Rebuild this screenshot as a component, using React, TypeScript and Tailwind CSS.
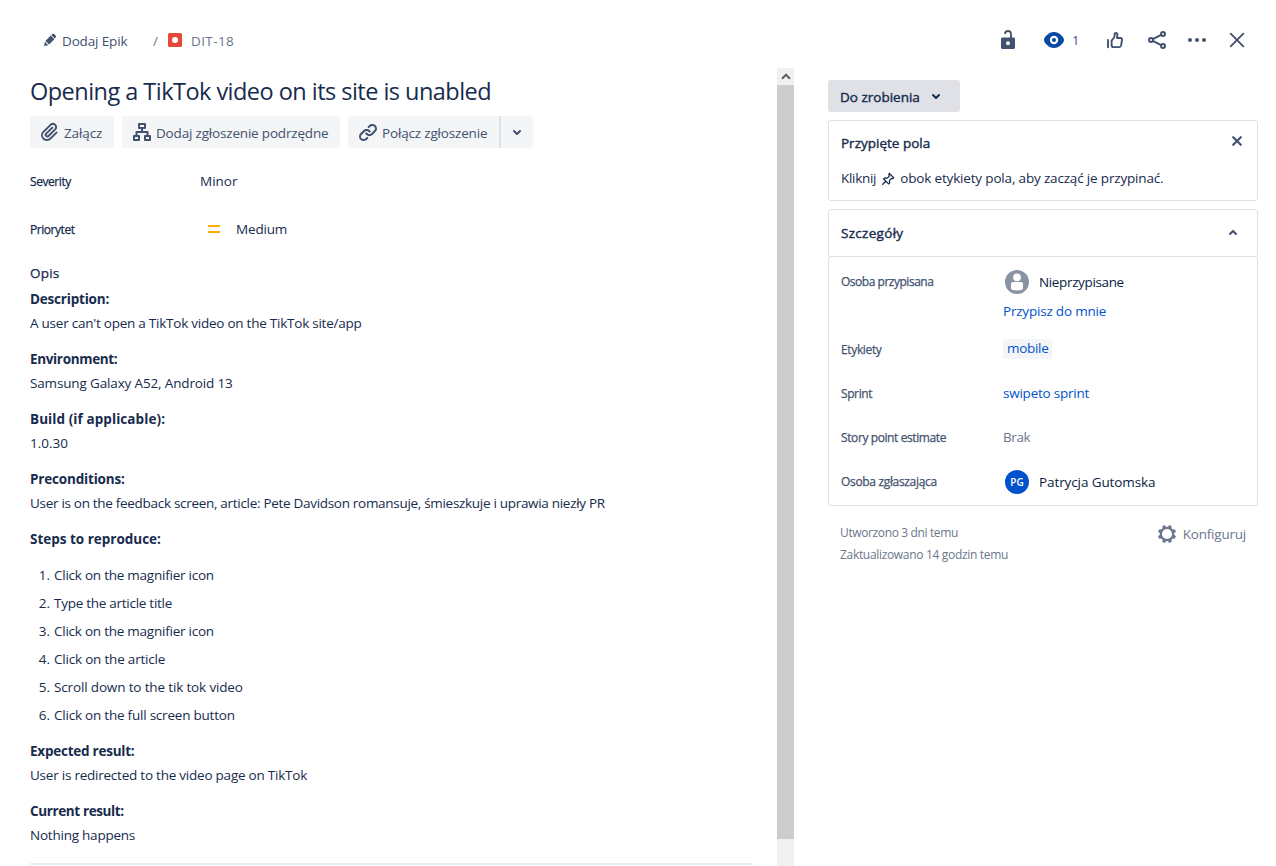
import React from "react";

const steps = [
  { text: "Click on the magnifier icon", cls: "tracking-[-0.24px]" },
  { text: "Type the article title", cls: "tracking-[-0.27px]" },
  { text: "Click on the magnifier icon", cls: "tracking-[-0.24px]" },
  { text: "Click on the article", cls: "tracking-[-0.2px]" },
  { text: "Scroll down to the tik tok video", cls: "tracking-[-0.15px]" },
  { text: "Click on the full screen button", cls: "tracking-[-0.22px]" },
];

function Icon({ className = "", children }: { className?: string; children: React.ReactNode }) {
  return (
    <svg viewBox="0 0 24 24" className={`size-6 shrink-0 ${className}`} fill="currentColor">
      {children}
    </svg>
  );
}

function ChevronDown({ className = "" }: { className?: string }) {
  return (
    <Icon className={className}>
      <path d="M8.292 10.293a1.009 1.009 0 000 1.419l2.939 2.965c.218.215.5.322.779.322s.556-.107.769-.322l2.93-2.955a1.01 1.01 0 000-1.419.987.987 0 00-1.406 0l-2.298 2.317-2.307-2.327a.99.99 0 00-1.406 0z" />
    </Icon>
  );
}

function Header() {
  return (
    <header className="flex h-[68px] shrink-0 items-start justify-between pt-[28px] pl-[38px] pr-[27px]">
      <div className="flex h-6 items-center text-[#42526e]">
        <Icon>
          <path d="M6.200 18l.6-4.200 3.500 3.500zM7.400 12.900l5.300-5.300 3.700 3.700-5.300 5.300zM13.300 7l.9-.8c.7-.6 1.500-.6 2.100 0l1.300 1.300c.6.6.6 1.400 0 2.100l-.8.9z" />
        </Icon>
        <span className="w-[91px] pt-[2px] tracking-[-0.15px]">Dodaj Epik</span>
        <span className="w-[15px] pt-[2px] text-[#6b778c]">/</span>
        <svg viewBox="0 0 14 14" className="size-[14px]">
          <rect width="14" height="14" rx="1.5" fill="#e5493a" />
          <circle cx="7" cy="7" r="3" fill="#fff" />
        </svg>
        <span className="ml-[9px] pt-[2px] tracking-[0.4px] text-[#6b778c]">DIT-18</span>
      </div>
      <div className="flex h-6 items-center text-[#42526e]">
        <Icon>
          <path
            fillRule="evenodd"
            d="M6.500 9.500h11c.8 0 1.500.7 1.500 1.500v8.500c0 .8-.7 1.500-1.500 1.500h-11c-.8 0-1.500-.7-1.500-1.500V11c0-.8.7-1.500 1.500-1.500zM12 13.200a2 2 0 100 4 2 2 0 000-4z"
          />
          <path d="M15 10.500V6a3 3 0 00-6 0" fill="none" stroke="currentColor" strokeWidth="1.800" />
        </Icon>
        <Icon className="ml-[22px] text-[#0747a6]">
          <path
            fillRule="evenodd"
            d="M12 4C6.800 4 2 9.200 2 12s4.800 8 10 8 10-5.200 10-8-4.800-8-10-8zM12 7.800a4.200 4.200 0 110 8.400 4.200 4.200 0 010-8.400z"
          />
          <circle cx="12" cy="12" r="2" />
        </Icon>
        <span className="ml-[6px] w-[31px] pt-[2px] text-[13px] text-[#5243aa]">1</span>
        <Icon>
          <g fill="none" stroke="currentColor" strokeWidth="1.900" strokeLinejoin="round" strokeLinecap="round">
            <path d="M5 12v7.200" />
            <path d="M8.600 12.700l2.500-3.200c.4-.6.500-1.600.5-2.700 0-1.100.6-1.800 1.400-1.800s1.500.8 1.400 2L14 10h3.500c1.100 0 1.700.9 1.500 1.900l-.9 5.500c-.2 1-.8 1.700-1.800 1.700h-5.700c-1.200 0-2-.8-2-1.900z" />
          </g>
        </Icon>
        <Icon className="ml-[18px]">
          <g fill="none" stroke="currentColor" strokeWidth="2">
            <circle cx="6" cy="12" r="2" />
            <circle cx="18" cy="6" r="2" />
            <circle cx="18" cy="18" r="2" />
            <path d="M7.800 11.100l8.400-4.200M7.800 12.900l8.400 4.200" />
          </g>
        </Icon>
        <Icon className="ml-[16px]">
          <circle cx="5" cy="12" r="2" />
          <circle cx="12" cy="12" r="2" />
          <circle cx="19" cy="12" r="2" />
        </Icon>
        <Icon className="ml-[16px]">
          <path d="M5.700 5.700l12.600 12.600M18.300 5.700L5.700 18.300" stroke="currentColor" strokeWidth="1.900" strokeLinecap="round" />
        </Icon>
      </div>
    </header>
  );
}

function Actions() {
  return (
    <div className="flex h-8 gap-2 text-[#42526e]">
      <div className="flex w-[84px] items-center rounded-[3px] bg-[#f4f5f7] pl-[8px]">
        <Icon>
          <path d="M11.643 17.965c-1.53 1.495-4.016 1.496-5.542.004a3.773 3.773 0 01.002-5.412l7.147-6.985a2.316 2.316 0 013.233-.003c.893.873.895 2.282.004 3.153l-6.703 6.55a.653.653 0 01-.914-.008.62.62 0 010-.902l6.229-6.087a.941.941 0 000-1.353.995.995 0 00-1.384 0l-6.23 6.087a2.502 2.502 0 000 3.607 2.643 2.643 0 003.683.009l6.703-6.55a4.074 4.074 0 00-.003-5.859 4.306 4.306 0 00-6.002.003l-7.148 6.985a5.655 5.655 0 00-.001 8.118c2.29 2.237 6.014 2.238 8.304.002l6.229-6.087a.941.941 0 000-1.353.995.995 0 00-1.384 0l-6.221 6.094z" />
        </Icon>
        <span className="ml-[2px] pt-[3px] tracking-[-0.12px]">Załącz</span>
      </div>
      <div className="flex w-[218px] items-center rounded-[3px] bg-[#f4f5f7] pl-[8px]">
        <Icon>
          <g fill="none" stroke="currentColor" strokeWidth="2" strokeLinejoin="round">
            <rect x="9" y="4" width="6" height="4" />
            <rect x="4" y="16" width="5" height="4" />
            <rect x="15" y="16" width="5" height="4" />
            <path d="M12 8v4M6.500 16v-4h11v4" />
          </g>
        </Icon>
        <span className="ml-[2px] pt-[3px] tracking-[-0.18px] whitespace-nowrap">Dodaj zgłoszenie podrzędne</span>
      </div>
      <div className="flex">
        <div className="flex w-[151px] items-center rounded-l-[3px] bg-[#f4f5f7] pl-[8px]">
          <Icon>
            <path d="M12.856 5.457l-.937.92a1.002 1.002 0 000 1.437 1.047 1.047 0 001.463 0l.984-.966c.967-.95 2.542-1.135 3.602-.288a2.54 2.54 0 01.203 3.81l-2.903 2.852a2.646 2.646 0 01-3.696 0l-1.11-1.09L9 13.57l1.108 1.089c1.822 1.788 4.802 1.788 6.622 0l2.905-2.852a4.558 4.558 0 00-.357-6.82c-1.893-1.517-4.695-1.226-6.422.47" />
            <path d="M11.144 19.543l.937-.92a1.002 1.002 0 000-1.437 1.047 1.047 0 00-1.462 0l-.985.966c-.967.95-2.541 1.135-3.602.288a2.54 2.54 0 01-.203-3.81l2.903-2.852a2.646 2.646 0 013.696 0l1.11 1.09L15 11.43l-1.108-1.089c-1.822-1.788-4.802-1.788-6.622 0l-2.905 2.852a4.558 4.558 0 00.357 6.82c1.893 1.517 4.695 1.226 6.422-.47" />
          </Icon>
          <span className="ml-[2px] pt-[3px] tracking-[-0.17px] whitespace-nowrap">Połącz zgłoszenie</span>
        </div>
        <div className="flex w-[34px] items-center rounded-r-[3px] border-l-2 border-[#dfe1e6] bg-[#f4f5f7] pl-[4px]">
          <ChevronDown />
        </div>
      </div>
    </div>
  );
}

function Section({ title, cls, children }: { title: string; cls: string; children?: React.ReactNode }) {
  return (
    <section className="leading-6">
      <h3 className={`h-6 font-bold ${cls}`}>{title}</h3>
      {children}
    </section>
  );
}

function Issue() {
  return (
    <main className="flex w-[777px] flex-col pl-[30px] pr-[24px]">
      <h1 className="mt-[7px] h-8 text-[23.5px] leading-8 tracking-[-0.53px] whitespace-nowrap">
        Opening a TikTok video on its site is unabled
      </h1>
      <div className="mt-[9px]">
        <Actions />
      </div>
      <div className="mt-[23px] flex h-5 items-center">
        <span className="w-[170px] pt-[1px] text-[12px] tracking-[-0.42px] [-webkit-text-stroke:0.25px]">Severity</span>
        <span>Minor</span>
      </div>
      <div className="mt-[28px] flex h-5 items-center">
        <span className="w-[178px] pt-[1px] text-[12px] tracking-[-0.45px] [-webkit-text-stroke:0.25px]">Priorytet</span>
        <svg viewBox="0 0 12 8" className="mr-[16px] h-[8px] w-[12px]">
          <path d="M0 1h12M0 7h12" stroke="#ffab00" strokeWidth="2" />
        </svg>
        <span className="tracking-[-0.17px]">Medium</span>
      </div>
      <h2 className="mt-[24px] h-5 leading-5 tracking-[0.2px] [-webkit-text-stroke:0.25px]">Opis</h2>
      <div className="mt-[4px] flex flex-col gap-3">
        <Section title="Description:" cls="tracking-[-0.2px]">
          <p className="tracking-[-0.24px]">A user can't open a TikTok video on the TikTok site/app</p>
        </Section>
        <Section title="Environment:" cls="tracking-[-0.34px]">
          <p className="tracking-[-0.15px]">Samsung Galaxy A52, Android 13</p>
        </Section>
        <Section title="Build (if applicable):" cls="tracking-[0.08px]">
          <p>1.0.30</p>
        </Section>
        <Section title="Preconditions:" cls="tracking-[-0.18px]">
          <p className="tracking-[-0.3px] whitespace-nowrap">
            User is on the feedback screen, article: Pete Davidson romansuje, śmieszkuje i uprawia niezły PR
          </p>
        </Section>
        <Section title="Steps to reproduce:" cls="tracking-[-0.01px]" />
        <ol className="flex flex-col gap-1 leading-6">
          {steps.map((s, i) => (
            <li key={i} className="flex">
              <span className="w-[24px] pr-[4px] text-right">{i + 1}.</span>
              <span className={s.cls}>{s.text}</span>
            </li>
          ))}
        </ol>
        <Section title="Expected result:" cls="tracking-[-0.24px]">
          <p className="tracking-[-0.23px]">User is redirected to the video page on TikTok</p>
        </Section>
        <Section title="Current result:" cls="tracking-[-0.38px]">
          <p className="tracking-[-0.23px]">Nothing happens</p>
        </Section>
      </div>
      <div className="mt-[16px] h-[2px] shrink-0 bg-[#ebecf0]" />
    </main>
  );
}

function Scrollbar() {
  return (
    <div className="flex w-[17px] flex-col bg-[#f0f0f0]">
      <div className="flex h-[17px] items-center justify-center pb-[1px]">
        <svg viewBox="0 0 10 7" className="h-[7px] w-[10px]">
          <path d="M1 5.700L5 1.700l4 4" fill="none" stroke="#606060" strokeWidth="2" />
        </svg>
      </div>
      <div className="h-[754px] bg-[#cdcdcd]" />
    </div>
  );
}

function Field({
  label,
  cls,
  className,
  children,
}: {
  label: string;
  cls: string;
  className: string;
  children: React.ReactNode;
}) {
  return (
    <div className={`flex ${className}`}>
      <span className={`w-[162px] shrink-0 text-[12px] leading-5 text-[#42526e] [-webkit-text-stroke:0.25px] ${cls}`}>
        {label}
      </span>
      {children}
    </div>
  );
}

function Sidebar() {
  return (
    <aside className="ml-[34px] w-[430px] pt-[12px]">
      <div className="flex h-8 w-[132px] items-center rounded-[3px] bg-[#dfe1e6] pl-3">
        <span className="w-[84px] pt-[3px] whitespace-nowrap [-webkit-text-stroke:0.4px]">Do zrobienia</span>
        <ChevronDown />
      </div>
      <section className="mt-[8px] h-[81px] rounded-[3px] border border-[#dfe1e6] pl-3">
        <div className="flex h-[40px] items-center justify-between pr-[8px]">
          <h2 className="pt-[4px] [-webkit-text-stroke:0.4px]">Przypięte pola</h2>
          <Icon className="text-[#42526e]">
            <path d="M8.200 8.200l7.600 7.600M15.800 8.200l-7.600 7.600" stroke="currentColor" strokeWidth="2.200" strokeLinecap="round" />
          </Icon>
        </div>
        <p className="mt-[7px] flex h-5 items-center whitespace-nowrap">
          <span className="tracking-[-0.29px]">Kliknij</span>
          <svg viewBox="0 0 14 14" className="mt-[1px] mr-[5px] ml-[5px] size-[14px]" fill="none" stroke="currentColor" strokeWidth="1.300" strokeLinejoin="round">
            <path d="M8.200 1.300l4.600 4.600-1.100.7-1.300-.1-1.900 1.900.1 2.700-1 .8L2.700 7l.9-1 2.700.1 1.900-1.900L8 2.700zM4.700 9.300L1.300 12.700" />
          </svg>
          <span className="tracking-[-0.17px]">obok etykiety pola, aby zacząć je przypinać.</span>
        </p>
      </section>
      <section className="mt-[8px]">
        <div className="flex h-[48px] items-center justify-between rounded-[3px] border border-[#dfe1e6] pr-[12px] pl-3">
          <h2 className="tracking-[0.3px] [-webkit-text-stroke:0.4px]">Szczegóły</h2>
          <ChevronDown className="rotate-180 text-[#42526e]" />
        </div>
        <div className="-mt-px h-[250px] rounded-[3px] border border-[#dfe1e6] pl-3">
          <Field label="Osoba przypisana" cls="tracking-[-0.48px]" className="mt-[15px] h-[68px]">
            <div className="flex flex-col text-[#091e42]">
              <div className="-mt-[2px] flex h-6 items-center">
                <svg viewBox="0 0 24 24" className="ml-[2px] size-6">
                  <circle cx="12" cy="12" r="12" fill="#8993a4" />
                  <circle cx="12" cy="7.300" r="3.900" fill="#fff" />
                  <path d="M6 14c0-1.200.8-2 2-2h8c1.200 0 2 .8 2 2v4.500c0 1.300-2.500 2-6 2s-6-.7-6-2z" fill="#fff" />
                </svg>
                <span className="ml-[10px] tracking-[-0.36px]">Nieprzypisane</span>
              </div>
              <span className="mt-[7px] h-5 leading-5 tracking-[-0.2px] text-[#0052cc]">Przypisz do mnie</span>
            </div>
          </Field>
          <Field label="Etykiety" cls="tracking-[-0.35px]" className="h-[44px]">
            <span className="-mt-px h-5 w-[49px] rounded-[3px] bg-[#f4f5f7] pl-[4px] leading-[18px] tracking-[-0.3px] text-[#0052cc]">
              mobile
            </span>
          </Field>
          <Field label="Sprint" cls="tracking-[-0.4px]" className="h-[44px]">
            <span className="leading-[18px] tracking-[-0.23px] text-[#0052cc]">swipeto sprint</span>
          </Field>
          <Field label="Story point estimate" cls="tracking-[-0.4px]" className="h-[44px]">
            <span className="leading-[18px] tracking-[-0.4px] text-[#6b778c]">Brak</span>
          </Field>
          <Field label="Osoba zgłaszająca" cls="tracking-[-0.33px]" className="h-6">
            <div className="-mt-[2px] flex h-6 items-center text-[#091e42]">
              <span className="ml-[2px] flex size-6 items-center justify-center rounded-full bg-[#0052cc] text-[10px] font-semibold text-white">
                PG
              </span>
              <span className="ml-[10px] tracking-[-0.1px]">Patrycja Gutomska</span>
            </div>
          </Field>
        </div>
      </section>
      <footer className="mt-[16px] flex justify-between pr-[12px] pl-3 text-[#6b778c]">
        <div className="text-[12px] leading-[22px]">
          <p className="tracking-[-0.37px]">Utworzono 3 dni temu</p>
          <p className="tracking-[-0.32px]">Zaktualizowano 14 godzin temu</p>
        </div>
        <div className="flex h-6 items-center">
          <Icon>
            <circle cx="12" cy="12" r="6.200" fill="none" stroke="currentColor" strokeWidth="2.200" />
            {[22.5, 67.5, 112.5, 157.5, 202.5, 247.5, 292.5, 337.5].map((a) => (
              <rect key={a} x="10.300" y="2.900" width="3.400" height="3.200" rx="0.900" transform={`rotate(${a} 12 12)`} />
            ))}
          </Icon>
          <span className="ml-[4px] tracking-[-0.22px]">Konfiguruj</span>
        </div>
      </footer>
    </aside>
  );
}

export default function App() {
  return (
    <div className="flex h-[866px] w-[1276px] flex-col overflow-hidden bg-white font-['Open_Sans','Noto_Sans',sans-serif] text-[13.5px] text-[#172b4d]">
      <Header />
      <div className="flex min-h-0 flex-1">
        <Issue />
        <Scrollbar />
        <Sidebar />
      </div>
    </div>
  );
}
